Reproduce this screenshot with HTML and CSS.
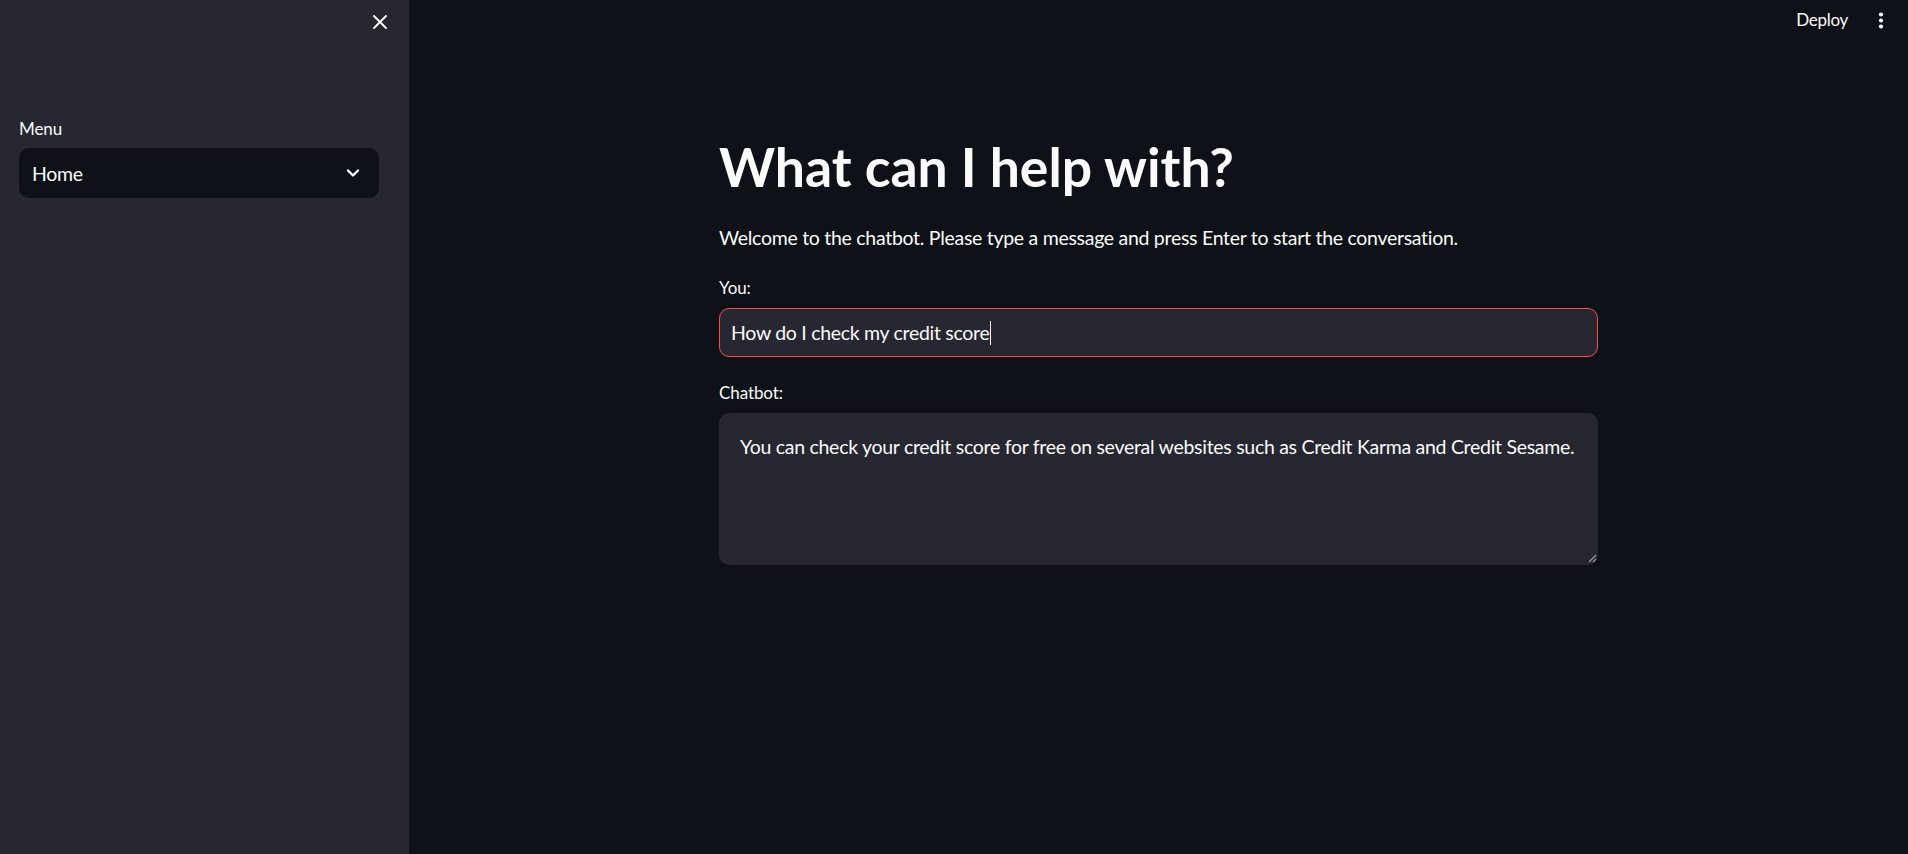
FILE: index.html
```html
<!DOCTYPE html>
<html lang="en">
<head>
<meta charset="utf-8">
<title>Chatbot</title>
<link rel="stylesheet" href="styles.css">
</head>
<body>
<div class="app">
  <aside class="sidebar">
    <div class="sidebar-top">
      <button class="close-btn" aria-label="Close sidebar">
        <svg width="16" height="16" viewBox="0 0 16 16"><path d="M2 2 L14 14 M14 2 L2 14" stroke="#FAFAFA" stroke-width="1.9" stroke-linecap="round" fill="none"/></svg>
      </button>
    </div>
    <div class="sidebar-content">
      <div class="field-label">Menu</div>
      <div class="select">
        <span class="select-value">Home</span>
        <svg class="chevron" width="14" height="10" viewBox="0 0 14 10"><path d="M2 2.5 L7 7.5 L12 2.5" stroke="#FAFAFA" stroke-width="2.4" stroke-linecap="round" stroke-linejoin="round" fill="none"/></svg>
      </div>
    </div>
  </aside>
  <main class="main">
    <header class="topbar">
      <span class="deploy">Deploy</span>
      <svg class="kebab" width="6" height="17" viewBox="0 0 6 17"><circle cx="3" cy="2.5" r="2.1" fill="#FAFAFA"/><circle cx="3" cy="8.5" r="2.1" fill="#FAFAFA"/><circle cx="3" cy="14.5" r="2.1" fill="#FAFAFA"/></svg>
    </header>
    <div class="content">
      <h1 class="title">What can I help with?</h1>
      <p class="intro">Welcome to the chatbot. Please type a message and press Enter to start the conversation.</p>
      <div class="field-label main-label">You:</div>
      <div class="text-input"><span class="input-text">How do I check my credit score</span><span class="caret"></span></div>
      <div class="field-label main-label chatbot-label">Chatbot:</div>
      <div class="text-area">
        <span class="area-text">You can check your credit score for free on several websites such as Credit Karma and Credit Sesame.</span>
        <svg class="grip" width="10" height="10" viewBox="0 0 10 10"><path d="M9 2 L2 9 M9 6 L6 9" stroke="#9a9aa3" stroke-width="1.2" fill="none"/></svg>
      </div>
    </div>
  </main>
</div>
</body>
</html>
```

FILE: styles.css
```css
* { box-sizing: border-box; }
html, body { margin: 0; padding: 0; height: 100%; }
body {
  font-family: Lato, "Open Sans", sans-serif;
  color: #FAFAFA;
  background: #0E1117;
}
.app {
  display: flex;
  height: 100vh;
}
.sidebar {
  width: 409px;
  flex-shrink: 0;
  background: #262730;
  display: flex;
  flex-direction: column;
}
.sidebar-top {
  height: 44px;
  display: flex;
  justify-content: flex-end;
  align-items: center;
  padding-right: 21px;
}
.close-btn {
  background: none;
  border: none;
  padding: 0;
  width: 16px;
  height: 16px;
  display: flex;
  cursor: pointer;
}
.sidebar-content {
  padding: 71px 30px 0 19px;
}
.field-label {
  font-size: 17px;
  line-height: 27px;
  letter-spacing: -0.1px;
}
.select {
  margin-top: 6px;
  height: 50px;
  background: #0E1117;
  border-radius: 10px;
  display: flex;
  align-items: center;
  justify-content: space-between;
  padding: 0 19px 0 13px;
}
.select-value {
  font-size: 19.5px;
  letter-spacing: -0.3px;
}
.main {
  flex: 1;
  display: flex;
  flex-direction: column;
  background: #0E1117;
}
.topbar {
  height: 40px;
  display: flex;
  justify-content: flex-end;
  align-items: flex-start;
  gap: 30px;
  padding-right: 24px;
}
.deploy {
  margin-top: 6px;
  font-size: 17px;
  line-height: 27px;
  letter-spacing: -0.3px;
}
.kebab { margin-top: 12px; }
.content {
  width: 879px;
  margin: 0 auto;
  padding-top: 94px;
  display: flex;
  flex-direction: column;
}
.title {
  margin: 0;
  font-size: 53.5px;
  line-height: 64px;
  font-weight: 700;
  letter-spacing: 0;
}
.intro {
  margin: 24px 0 0;
  font-size: 19.5px;
  line-height: 31px;
  letter-spacing: -0.29px;
}
.main-label { margin-top: 21px; }
.chatbot-label { margin-top: 22px; }
.text-input {
  margin-top: 7px;
  height: 49px;
  background: #262730;
  border: 1px solid #FF4B4B;
  border-radius: 10px;
  display: flex;
  align-items: center;
  padding-left: 11px;
}
.input-text {
  font-size: 19.5px;
  letter-spacing: -0.3px;
}
.caret {
  width: 1px;
  height: 24px;
  background: #FAFAFA;
  margin-left: 1px;
}
.text-area {
  position: relative;
  margin-top: 7px;
  height: 152px;
  background: #262730;
  border-radius: 10px;
  padding: 18px 21px;
}
.area-text {
  font-size: 19.5px;
  line-height: 31px;
  letter-spacing: -0.29px;
}
.grip {
  position: absolute;
  right: 1px;
  bottom: 2px;
}
```
